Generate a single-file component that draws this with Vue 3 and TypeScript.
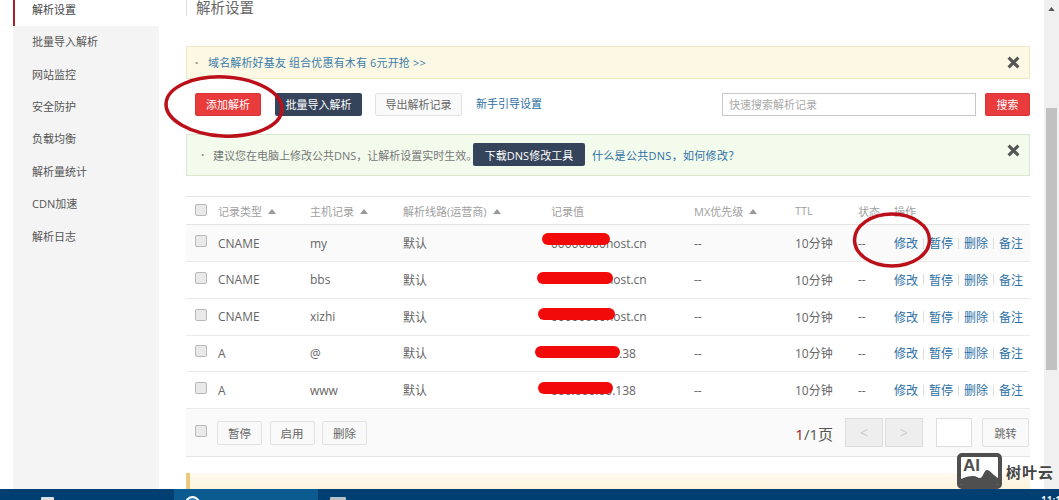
<template>
  <div class="page">
    <div class="body">
      <!-- 左侧菜单 -->
      <aside class="side">
        <div class="side-active">解析设置</div>
        <div class="side-list">
          <div v-for="item in menu" :key="item" class="side-item">{{ item }}</div>
        </div>
      </aside>

      <main class="main">
        <h2 class="title">解析设置</h2>

        <div class="notice notice-yellow">
          <span class="dot">·</span>
          <span class="notice-link">域名解析好基友 组合优惠有木有 6元开抢 &gt;&gt;</span>
          <svg class="close" viewBox="0 0 12 12"><path d="M1.5 1.5l9 9M10.5 1.5l-9 9" /></svg>
        </div>

        <div class="toolbar">
          <button class="btn btn-red btn-add">添加解析</button>
          <button class="btn btn-dark btn-import">批量导入解析</button>
          <button class="btn btn-plain btn-export">导出解析记录</button>
          <span class="link guide">新手引导设置</span>
          <div class="search">快速搜索解析记录</div>
          <button class="btn btn-red btn-search">搜索</button>
        </div>

        <div class="notice notice-green">
          <span class="dot">·</span>
          <span class="green-text">建议您在电脑上修改公共DNS，让解析设置实时生效。</span>
          <button class="btn btn-dark btn-tool">下载DNS修改工具</button>
          <span class="link green-link">什么是公共DNS，如何修改？</span>
          <svg class="close" viewBox="0 0 12 12"><path d="M1.5 1.5l9 9M10.5 1.5l-9 9" /></svg>
        </div>

        <!-- 解析记录表 -->
        <div class="table">
          <div class="row head">
            <span class="check"></span>
            <span>记录类型<i class="sort"></i></span>
            <span>主机记录<i class="sort"></i></span>
            <span>解析线路(运营商)<i class="sort"></i></span>
            <span>记录值</span>
            <span>MX优先级<i class="sort"></i></span>
            <span>TTL</span>
            <span>状态</span>
            <span>操作</span>
          </div>
          <div v-for="(rec, i) in records" :key="rec.host" class="row" :class="{ hover: i === 0 }">
            <span class="check"></span>
            <span>{{ rec.type }}</span>
            <span>{{ rec.host }}</span>
            <span>默认</span>
            <span class="value">
              {{ rec.value }}
              <i class="mask" :style="{ left: rec.mask[0] + 'px', width: rec.mask[1] + 'px', top: rec.mask[2] + 'px' }"></i>
            </span>
            <span>--</span>
            <span>10分钟</span>
            <span>--</span>
            <span class="ops">
              <template v-for="(op, k) in ops" :key="op">
                <i v-if="k > 0" class="sep"></i>
                <span class="link">{{ op }}</span>
              </template>
            </span>
          </div>
          <div class="foot">
            <span class="check"></span>
            <button class="btn btn-plain btn-mini">暂停</button>
            <button class="btn btn-plain btn-mini">启用</button>
            <button class="btn btn-plain btn-mini">删除</button>
            <span class="pager-text"><b>1</b>/1页</span>
            <span class="pager-btn">&lt;</span>
            <span class="pager-btn">&gt;</span>
            <span class="pager-input"></span>
            <button class="btn btn-plain btn-jump">跳转</button>
          </div>
        </div>

        <div class="strip"></div>
      </main>

      <div class="scrollbar">
        <svg class="scroll-arrow" viewBox="0 0 8 5"><path d="M4 0l4 5H0z" /></svg>
        <div class="scroll-thumb"></div>
      </div>
    </div>

    <!-- 任务栏 -->
    <footer class="taskbar">
      <span class="task-icon icon-a"></span>
      <div class="task-active"><span class="task-circle"></span></div>
      <span class="task-icon icon-b"></span>
      <span class="clock">11:1</span>
    </footer>

    <!-- 红圈标注 -->
    <svg class="marks" width="1059" height="500">
      <ellipse cx="224" cy="106.5" rx="58" ry="29.5" transform="rotate(3 224 106.5)" />
      <ellipse cx="892" cy="240" rx="37.5" ry="26" />
    </svg>

    <!-- 水印 -->
    <div class="watermark">
      <div class="wm-logo">
        <svg class="wm-hill" viewBox="0 0 37 28">
          <path d="M0 28V22C4 20 8 19 12 19C15 19 17 21 19 21C22 21 23 13 26 13C29 13 32 18 37 21V28Z" />
        </svg>
        <span class="wm-ai">AI</span>
      </div>
      <span class="wm-text">树叶云</span>
    </div>
  </div>
</template>

<script setup lang="ts">
interface DnsRecord {
  type: string
  host: string
  value: string
  /** 遮挡条：left / width / top */
  mask: [number, number, number]
}

const menu = ['批量导入解析', '网站监控', '安全防护', '负载均衡', '解析量统计', 'CDN加速', '解析日志']
const ops = ['修改', '暂停', '删除', '备注']

const records: DnsRecord[] = [
  { type: 'CNAME', host: 'my', value: '00000000host.cn', mask: [-9, 68, 8] },
  { type: 'CNAME', host: 'bbs', value: '00000000host.cn', mask: [-14, 76, 10] },
  { type: 'CNAME', host: 'xizhi', value: '00000000host.cn', mask: [-13, 77, 9] },
  { type: 'A', host: '@', value: '000.000.000.38', mask: [-16, 85, 10] },
  { type: 'A', host: 'www', value: '000.000.00.138', mask: [-13, 75, 10] }
]
</script>

<style>
html,
body {
  margin: 0;
  overflow: hidden;
}
</style>

<style scoped>
.page {
  position: relative;
  width: 1059px;
  height: 500px;
  overflow: hidden;
  display: flex;
  flex-direction: column;
  background: #fff;
  font-family: "Open Sans", "Noto Sans CJK SC", sans-serif;
  font-size: 11px;
  color: #666;
}

.body {
  flex: 1;
  min-height: 0;
  display: flex;
}

/* ========== 左侧菜单 ========== */
.side {
  width: 146px;
  margin-left: 13px;
  display: flex;
  flex-direction: column;
}

.side-active {
  height: 26px;
  box-sizing: border-box;
  padding: 0 0 6px 17px;
  line-height: 20px;
  border-left: 2px solid #a5232a;
  color: #444;
}

.side-list {
  flex: 1;
  background: #f4f4f4;
}

.side-item {
  height: 32.4px;
  box-sizing: border-box;
  padding: 0 0 2px 19px;
  display: flex;
  align-items: center;
  color: #555;
}

/* ========== 主区域 ========== */
.main {
  width: 844px;
  margin-left: 27px;
  display: flex;
  flex-direction: column;
}

.title {
  margin: 0 0 30px;
  height: 16px;
  padding-left: 9px;
  border-left: 1px solid #ddd;
  font-size: 14.5px;
  font-weight: 400;
  line-height: 16px;
  color: #666;
}

.notice {
  display: flex;
  align-items: center;
  box-sizing: border-box;
  border: 1px solid;
  position: relative;
}

.notice-yellow {
  height: 33px;
  padding-left: 8px;
  background: #fdf8e4;
  border-color: #efe8c4;
}

.notice-green {
  height: 43px;
  padding-left: 14px;
  background: #f3fbec;
  border-color: #dbe8d0;
}

.dot {
  width: 13px;
  font-size: 12px;
  font-weight: 700;
  color: #8a9a70;
}

.notice-green .dot {
  width: 12px;
}

.notice-link {
  letter-spacing: 0.15px;
  color: #3a7cab;
}

.green-text {
  width: 260px;
  white-space: nowrap;
  color: #777;
}

.green-link {
  letter-spacing: 0.3px;
}

.close {
  position: absolute;
  right: 9px;
  top: 9px;
  width: 13px;
  height: 13px;
  fill: none;
  stroke: #555;
  stroke-width: 2.8;
}

.link {
  color: #2d6fa6;
  white-space: nowrap;
}

/* ========== 按钮 ========== */
.btn {
  box-sizing: border-box;
  padding: 0;
  border: 1px solid transparent;
  border-radius: 2px;
  font: inherit;
  white-space: nowrap;
}

.btn-red {
  background: #e93a3c;
  border-color: #d83437;
  color: #fff;
}

.btn-dark {
  background: #35445a;
  color: #fff;
}

.btn-plain {
  background: #f9f9f9;
  border-color: #e2e2e2;
  color: #666;
}

.toolbar {
  height: 23px;
  margin: 14px 0 18px;
  display: flex;
  align-items: stretch;
}

.btn-add {
  width: 66px;
  margin-left: 9px;
}

.btn-import {
  width: 87px;
  margin-left: 14px;
}

.btn-export {
  width: 87px;
  margin-left: 13px;
}

.guide {
  margin-left: 14px;
  line-height: 21px;
}

.search {
  width: 254px;
  margin-left: auto;
  box-sizing: border-box;
  padding-left: 6px;
  border: 1px solid #c8c8c8;
  line-height: 21px;
  color: #aaa;
}

.btn-search {
  width: 45px;
  margin-left: 9px;
}

.btn-tool {
  width: 112px;
  height: 23px;
  margin-right: 7px;
}

/* ========== 表格 ========== */
.table {
  margin-top: 20px;
  border-top: 1px solid #e4e4e4;
}

.row {
  display: grid;
  grid-template-columns: 32px 92px 93px 148px 143px 101px 63px 36px 136px;
  align-items: center;
  height: 36.8px;
  box-sizing: border-box;
  border-bottom: 1px solid #e9e9e9;
  font-size: 12px;
  white-space: nowrap;
}

.row.hover {
  background: #fafafa;
}

.head {
  height: 28px;
  border-bottom-color: #e4e4e4;
  font-size: 11px;
  color: #a0a0a0;
}

.check {
  display: block;
  width: 10px;
  height: 10px;
  margin: -4px 0 0 9px;
  border: 1px solid #b9b9b9;
  border-radius: 2px;
  background: #e9e9e9;
}

.head .check {
  margin-top: -2px;
}

.sort {
  display: inline-block;
  margin-left: 6px;
  vertical-align: 2px;
  border-left: 4px solid transparent;
  border-right: 4px solid transparent;
  border-bottom: 5px solid #999;
}

.value {
  position: relative;
  align-self: stretch;
  display: flex;
  align-items: center;
}

.mask {
  position: absolute;
  height: 12px;
  border-radius: 6px;
  background: #f20a0a;
}

.ops {
  display: flex;
  align-items: center;
}

.sep {
  width: 1px;
  height: 11px;
  margin: 0 5px;
  background: #ddd;
}

.foot {
  height: 48px;
  box-sizing: border-box;
  display: flex;
  align-items: flex-start;
  padding-top: 12px;
  background: #fafafa;
  border-bottom: 1px solid #e4e4e4;
}

.foot .check {
  margin: 4px 10px 0 9px;
  flex: none;
}

.btn-mini {
  width: 45px;
  height: 24px;
  margin-right: 7.5px;
  font-size: 11.5px;
}

.btn-mini + .btn-mini + .btn-mini {
  margin-right: 0;
}

.pager-text {
  margin: 1px 12px 0 auto;
  font-size: 15px;
  line-height: 24px;
  color: #555;
}

.pager-text b {
  font-weight: 400;
  color: #a5232a;
}

.pager-btn {
  width: 38px;
  height: 29px;
  margin: -3px 2px 0 0;
  box-sizing: border-box;
  border: 1px solid #ddd;
  background: #eee;
  display: flex;
  align-items: center;
  justify-content: center;
  color: #ccc;
  font-size: 14px;
}

.pager-input {
  width: 36px;
  height: 29px;
  margin: -3px 10px 0 11px;
  box-sizing: border-box;
  border: 1px solid #ddd;
  background: #fff;
}

.btn-jump {
  width: 47px;
  height: 29px;
  margin: -3px 1px 0 0;
}

.strip {
  height: 16px;
  margin-top: 16px;
  background: linear-gradient(#fffaf0, #fdf3dc);
  border-left: 4px solid #ecc77e;
}

/* ========== 滚动条 ========== */
.scrollbar {
  position: relative;
  width: 15px;
  margin-left: 14px;
  background: #f0f0f0;
}

.scroll-arrow {
  position: absolute;
  left: 4px;
  top: 7px;
  width: 7px;
  height: 4px;
  fill: #555;
}

.scroll-thumb {
  position: absolute;
  left: 2px;
  right: 2px;
  top: 108px;
  height: 262px;
  background: #c1c1c1;
}

/* ========== 任务栏 ========== */
.taskbar {
  position: relative;
  height: 11px;
  flex: none;
  overflow: hidden;
  background: #003f72;
}

.task-active {
  position: absolute;
  left: 174px;
  top: 0;
  width: 144px;
  height: 100%;
  background: #0b5a90;
}

.task-circle {
  position: absolute;
  left: 11px;
  top: 7px;
  width: 11px;
  height: 11px;
  border: 2px solid #fff;
  border-radius: 50%;
  background: #2c86c9;
}

.task-icon {
  position: absolute;
  top: 8px;
  height: 12px;
  border-radius: 1px;
}

.icon-a {
  left: 41px;
  width: 13px;
  background: #d8dfe6;
}

.icon-b {
  left: 330px;
  width: 16px;
  background: #b9c2ca;
}

.clock {
  position: absolute;
  left: 1041px;
  top: 5px;
  font-size: 10px;
  font-weight: 600;
  line-height: 12px;
  color: #fff;
}

/* ========== 覆盖层 ========== */
.marks {
  position: absolute;
  left: 0;
  top: 0;
  pointer-events: none;
  fill: none;
  stroke: #bb101a;
  stroke-width: 3.5;
}

.watermark {
  position: absolute;
  left: 957px;
  top: 453px;
  display: flex;
  align-items: center;
  gap: 4px;
}

.wm-logo {
  position: relative;
  width: 45px;
  height: 36px;
  box-sizing: border-box;
  border: 4px solid #4f4f4f;
  border-radius: 5px;
  background: #fff;
  overflow: hidden;
}

.wm-ai {
  position: absolute;
  left: 2px;
  top: -1px;
  font-family: "Liberation Sans", sans-serif;
  font-size: 17px;
  font-weight: 700;
  line-height: 19px;
  color: #4f4f4f;
}

.wm-hill {
  position: absolute;
  left: 0;
  top: 0;
  width: 37px;
  height: 28px;
  fill: #4f4f4f;
}

.wm-text {
  font-family: "Noto Sans CJK SC", sans-serif;
  font-size: 15px;
  font-weight: 700;
  letter-spacing: 1px;
  color: #444;
}
</style>
